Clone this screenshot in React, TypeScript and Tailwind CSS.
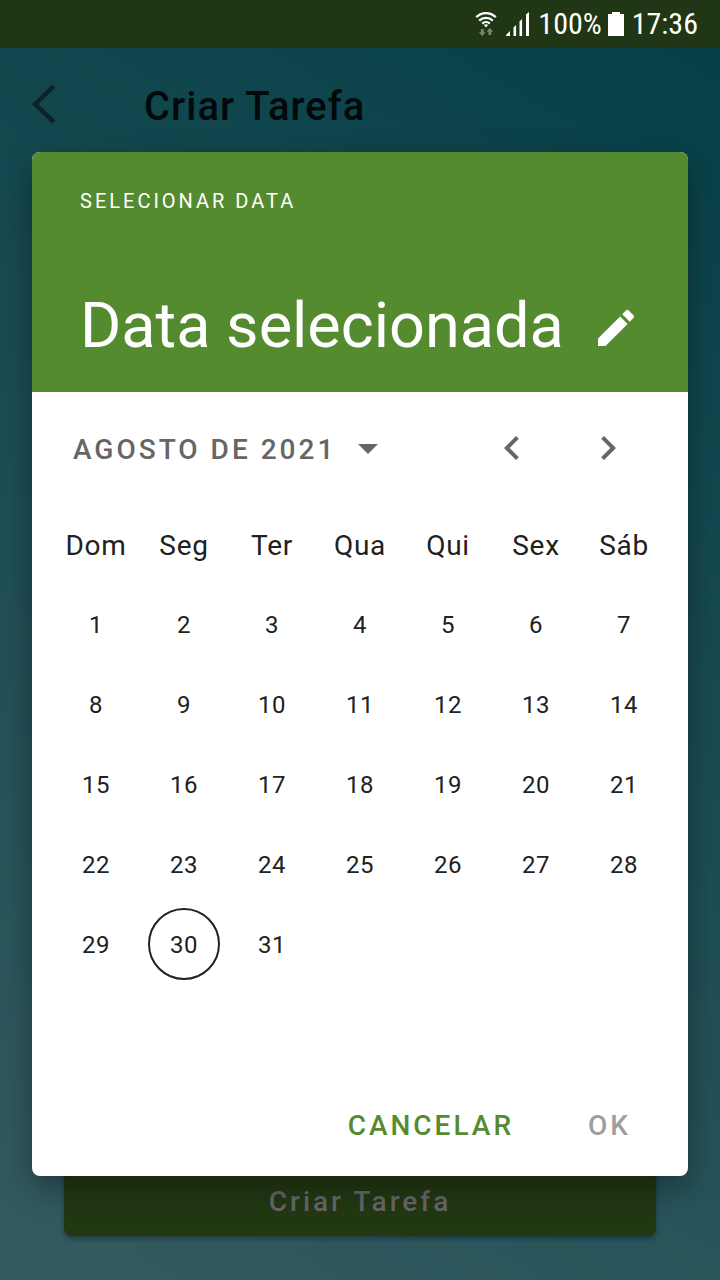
import { MdArrowDropDown, MdChevronLeft, MdChevronRight, MdEdit } from "react-icons/md";

const WEEKDAYS = ["Dom", "Seg", "Ter", "Qua", "Qui", "Sex", "Sáb"];
const WEEKS = [0, 1, 2, 3, 4, 5].map((week) =>
  WEEKDAYS.map((_, day) => week * 7 + day + 1).map((n) => (n <= 31 ? n : null)),
);
const TODAY = 30;

function WifiIcon() {
  return (
    <svg className="size-6" viewBox="0 0 24 24" fill="none" aria-hidden="true">
      <g stroke="#fff" strokeWidth="2.3">
        <path d="M2.200 5.200C8-.3 16-.3 21.800 5.200" />
        <path d="M5.200 8.600C9.200 4.900 14.800 4.900 18.800 8.600" />
        <path d="M8.200 11.600C10.400 9.600 13.600 9.600 15.800 11.600" />
      </g>
      <path d="M9.800 13Q12 11.600 14.200 13L12 15.600z" fill="#fff" />
      <path
        d="M6.900 17h2.800v3.300h2L8.300 24 4.900 20.300h2zM14.500 23v-3.300h-2l3.400-3.800 3.400 3.800h-2V23z"
        fill="#7b8672"
      />
    </svg>
  );
}

function SignalIcon() {
  return (
    <svg className="size-6" viewBox="0 0 24 24" fill="#fff" aria-hidden="true">
      <path d="M-1 24l5-5v5zM7.500 15.500l2.600-2.500v11H7.500zM13.500 9.500l2.600-2.500v17h-2.600zM20 2.500L23 0v24h-3z" />
    </svg>
  );
}

function BatteryIcon() {
  return (
    <svg className="h-6 w-4" viewBox="0 0 16 24" fill="#fff" aria-hidden="true">
      <path d="M4 0h8v2h4v22H0V2h4z" />
    </svg>
  );
}

function StatusBar() {
  return (
    <div className="flex h-12 items-center justify-end gap-2 bg-[#213614] pr-[22px] font-['Roboto_Condensed','Liberation_Sans_Narrow',Roboto,sans-serif] text-[30px] leading-none text-white">
      <WifiIcon />
      <SignalIcon />
      <div className="flex items-center gap-1.5">
        <span>100%</span>
        <BatteryIcon />
      </div>
      <span>17:36</span>
    </div>
  );
}

function DatePicker() {
  return (
    <section
      role="dialog"
      aria-label="Selecionar data"
      className="w-full overflow-hidden rounded-lg bg-white shadow-[0_12px_32px_rgba(0,0,0,0.35)]"
    >
      <header className="flex h-60 flex-col justify-between bg-[#558b2f] px-12 pt-[35px] pb-7 text-white">
        <p className="text-xl leading-7 tracking-[3px]">SELECIONAR DATA</p>
        <div className="flex items-center justify-between">
          <h2 className="pb-1 text-[63px] leading-17 whitespace-nowrap">Data selecionada</h2>
          <button type="button" aria-label="Editar">
            <MdEdit className="size-12" />
          </button>
        </div>
      </header>

      <div className="flex h-28 items-center justify-between pr-8 pl-[41px] text-[#666]">
        <button type="button" className="flex items-center gap-2 text-[28px] font-medium tracking-[3px]">
          <span className="pt-1">AGOSTO DE 2021</span>
          <MdArrowDropDown className="size-12" />
        </button>
        <div className="flex">
          <button type="button" aria-label="Mês anterior" className="flex w-24 justify-center">
            <MdChevronLeft className="size-12" />
          </button>
          <button type="button" aria-label="Próximo mês" className="flex w-24 justify-center">
            <MdChevronRight className="size-12" />
          </button>
        </div>
      </div>

      <div className="px-5">
        <table className="w-full table-fixed text-[#212121]">
          <thead>
            <tr>
              {WEEKDAYS.map((day) => (
                <th key={day} scope="col" className="h-20 p-0 pt-1 text-[28px] font-normal tracking-wide">
                  {day}
                </th>
              ))}
            </tr>
          </thead>
          <tbody>
            {WEEKS.map((week, i) => (
              <tr key={i}>
                {week.map((day, j) => (
                  <td key={j} className="h-20 p-0 text-center align-middle">
                    {day && (
                      <button
                        type="button"
                        className={
                          day === TODAY
                            ? "size-18 rounded-full border-2 border-[#212121] pt-0.5 text-2xl tracking-wide"
                            : "size-18 rounded-full pt-0.5 text-2xl tracking-wide"
                        }
                      >
                        {day}
                      </button>
                    )}
                  </td>
                ))}
              </tr>
            ))}
          </tbody>
        </table>
      </div>

      <div className="flex h-28 items-center justify-end gap-4 px-7 pt-3 text-[28px] font-medium tracking-[3px]">
        <button type="button" className="px-[29px] text-[#558b2f]">CANCELAR</button>
        <button type="button" disabled className="px-[29px] text-[#9e9e9e]">OK</button>
      </div>
    </section>
  );
}

export default function App() {
  return (
    <div className="relative flex min-h-screen flex-col bg-linear-[30deg] from-[#345b61] to-[#053f47] font-[Roboto,sans-serif]">
      <StatusBar />
      <header className="flex h-28 items-center px-8">
        <button type="button" aria-label="Voltar" className="w-28">
          <svg className="h-10 w-6" viewBox="0 0 24 40" fill="none" stroke="#0b2327" strokeWidth="4.5" aria-hidden="true">
            <path d="M21.800 2L3.200 20.200 21.800 38" />
          </svg>
        </button>
        <h1 className="pt-1.5 text-[40px] font-medium tracking-wide text-[#02090a]">Criar Tarefa</h1>
      </header>
      <main className="flex grow flex-col justify-end px-16 pb-11">
        <button
          type="button"
          className="h-18 rounded-lg bg-[#223813] pt-1 text-[28px] font-medium tracking-[3px] text-[#666] shadow-[0_3px_5px_rgba(0,0,0,0.3)]"
        >
          Criar Tarefa
        </button>
      </main>
      <div className="absolute inset-x-0 top-12 bottom-0 flex items-center p-8">
        <DatePicker />
      </div>
    </div>
  );
}
